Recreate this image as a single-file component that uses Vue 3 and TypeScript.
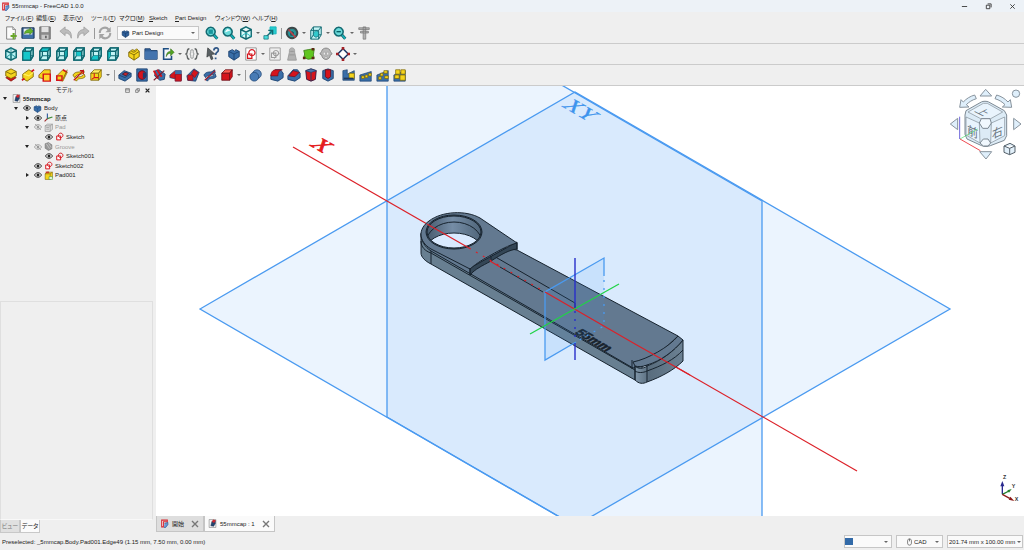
<script setup lang="ts">
import { ref } from 'vue'

interface Shape {
  d: string
  fill?: string
  stroke?: string
  w?: number
}
type Kind = 'icon' | 'arrow' | 'sep' | 'gap' | 'combo'
interface Tool {
  kind: Kind
  label?: string
  shapes?: Shape[]
}

const s = (d: string, fill = 'none', stroke = 'none', w = 1): Shape => ({ d, fill, stroke, w })
const icon = (label: string, ...shapes: Shape[]): Tool => ({ kind: 'icon', label, shapes })
const arrow: Tool = { kind: 'arrow' }
const sep: Tool = { kind: 'sep' }
const gap: Tool = { kind: 'gap' }
const combo: Tool = { kind: 'combo' }

const teal = '#17b5bb'
const deep = '#126a72'
const navy = '#1d4270'
const blue = '#396ea8'
const red = '#d5141c'
const yellow = '#f4d41c'
const olive = '#7a6408'
const gray = '#9b9b9b'

const FRAME = 'M2 5h9v10H2zM2 5l3-4h9v9l-3 5M11 5l3-4M5 1v9h9M5 10l-3 5'
const view = (label: string, face: string): Tool =>
  icon(label, s('M2 5l3-4h9v9l-3 5H2z', '#c4f5f6'), s(FRAME, 'none', deep, 1.4), s(face, '#16c6ca'), s('M2 5h9v10H2zM2 5l3-4h9v9l-3 5M11 5l3-4', 'none', deep, 1.5))
const ISO = 'M8 1l6 3v8l-6 3-6-3V4zM2 4l6 3 6-3M8 7v8'
const glass = [
  s('M9.5 9.5l4.5 5', 'none', deep, 3.4),
  s('M9.5 9.5l4.5 5', 'none', teal, 1.6),
  s('M6.5 1.5a5 5 0 1 0 .1 0z', '#6bdada', deep, 1.8),
]
const block = (top: string, side: string, edge: string): Shape[] => [
  s('M2 6l4-4h8l-3 4z', top, edge, 0.9),
  s('M2 6h9v8H2z', side, edge, 0.9),
  s('M11 6l3-4v8l-3 4z', side, edge, 0.9),
]
const arrowMark = s('M2 14L13 3M9 3h4v4', 'none', '#c4161c', 1.4)
const BODY = 'M2 5l4-2 3 2 1-2 4 2v6l-6 4-6-4z'
const sketchMark = [
  s('M3 7h7v7H3z', '#fff6f6', red, 1.7),
  s('M10 2a4 4 0 1 0 .1 0z', 'none', red, 1.7),
]

const rowFile: Tool[] = [
  icon('新規', s('M3 1h7l3 3v11H3z', '#fbfbfb', '#777', 1), s('M10 1v3h3', '#ddd', '#777', 0.8), s('M11 8v7M7.500 11.500h7', 'none', '#6aa62c', 2.4)),
  icon('開く', s('M1 2h14v12H1z', '#2d5688', '#193555', 1), s('M3 3h10v7H3z', '#e9eef3'), s('M4 9c0-4 3-5 6-5V2l4 4-4 4V8c-3 0-4 0-6 1z', '#63b32a', '#34701a', 0.6), s('M2 10h12v4H2z', '#3d6fa8')),
  icon('保存', s('M2 1h12v14H2z', '#8b8b8b', '#6b6b6b', 1), s('M4 1h8v6H4z', '#e2e2e2'), s('M4 10h8v5H4z', '#c7c7c7'), s('M8 11h2v3H8z', '#666')),
  gap,
  icon('元に戻す', s('M1 6l6-5v3c5 0 8 4 7 10-1-4-3-6-7-6v3z', '#bcbcbc', '#999', 0.8)),
  icon('やり直す', s('M15 6L9 1v3c-5 0-8 4-7 10 1-4 3-6 7-6v3z', '#bcbcbc', '#999', 0.8)),
  sep,
  icon('更新', s('M2 8c0-6 7-8 10-4M14 8c0 6-7 8-10 4', 'none', '#a3a3a3', 2.4), s('M14.500 1v6H8.500zM1.500 15V9h6z', '#a3a3a3')),
  combo,
  icon('全てにフィット', ...glass, s('M4 4h5v5H4z', '#18959b')),
  icon('選択にフィット', ...glass, s('M4 7l2-3 3 1', '#e9ffff', '#fff', 1)),
  icon('アイソメトリック', s(ISO, '#d9fbfb', deep, 1.6), s('M2 12l6-4 6 4', 'none', teal, 1)),
  arrow,
  icon('選択に合わせる', s('M8 1h7v8H8z', '#27cdd0', teal, 1), s('M2 14l8-8M6 5h5v5', 'none', deep, 1.6), s('M1 11h5v4H1z', '#47dede', deep, 0.8)),
  sep,
  icon('表示スタイル', s('M8 2a6 6 0 1 0 .1 0z', '#2f8a8e', '#3c4748', 2.2), s('M8 5l3 2v4l-3 1-3-1V7z', '#2a5a5e', teal, 0.8), s('M4 4l8 9', 'none', '#b9434a', 1.8)),
  arrow,
  icon('選択ビュー', s('M2 5l3-4h9v9l-3 5H2z', '#c4f5f6'), s(FRAME, 'none', deep, 1.1), s('M5 8l3-3 3 2v4l-3 2-3-2z', '#32c9cc', deep, 0.8)),
  arrow,
  icon('ズーム', ...glass, s('M4 6.500h5', 'none', '#075d63', 1.5)),
  arrow,
  icon('計測', s('M2 2h12v2H2zM4 6h9v2H4zM7 1h3v14H7z', '#b3b3b3', '#777', 0.8)),
]

const rowView: Tool[] = [
  icon('等角', s(ISO, '#b5f2f3', deep, 1.7), s('M8 1v6M2 12l6-4 6 4', 'none', '#1c8990', 1)),
  view('正面', 'M2 5h9v10H2z'),
  view('上面', 'M2 5l3-4h9l-3 4z'),
  view('右', 'M11 5l3-4v9l-3 5z'),
  view('背面', 'M5 5h6v5H5z'),
  view('底面', 'M2 15l3-5h6v5z'),
  view('左', 'M2 5h3v5l-3 5z'),
  gap,
  icon('パーツ', s('M2 6l4-3 3 1 2-2 3 3v6l-6 4-6-4z', yellow, olive, 1), s('M2 6l6 3 6-4M8 9v6M5 5l3 1 3-2', 'none', olive, 1)),
  icon('グループ', s('M1 2h6l1 2h7v10H1z', '#315f98', '#1e416d', 1), s('M1 5h14v9H1z', '#4474ae')),
  icon('リンク', s('M9 2H3v12h9v-4', '#f2f6fb', '#1d4e82', 1.8), s('M6 11c0-4 2-6 5-6V2l4 4-4 4V7c-3 0-4 2-5 4z', '#52a421', '#2c6413', 0.6)),
  arrow,
  icon('変数セット', s('M5 2C1 2 4 7 1 8c3 1 0 6 4 6M11 2c4 0 1 5 4 6-3 1 0 6-4 6', 'none', '#5e6262', 1.5), s('M8 3c-3 0 0 4-2.500 5 2.500 1-.500 5 2.500 5M8 3c3 0 0 4 2.500 5-2.500 1 .500 5-2.500 5', 'none', '#8a8f8f', 1)),
  gap,
  icon('これは何', s('M2 1l8 7-4 .500 2 5-2 1-2-5-3 2z', '#596063', '#35393b', 0.8), s('M9 4c0-4 6-4 5 0 0 2-3 2-3 5M11 12v2', 'none', '#325887', 2)),
  gap,
  icon('ボディ', s(BODY, blue, navy, 1), s('M2 5l6 3 6-3M8 8v7', 'none', navy, 1)),
  icon('スケッチ', s('M2 1h12v14H2z', '#fff', '#8b8b8b', 1), s('M4 8h5v5H4z', '#fff6f6', red, 1.4), s('M9 3a3.500 3.500 0 1 0 .1 0z', 'none', red, 1.4)),
  arrow,
  icon('スケッチを編集', s('M2 1h12v14H2z', '#eee', '#999', 1), s('M4 7h5v5H4zM9 4a3 3 0 1 0 .1 0M7 13l6-6', 'none', gray, 1.2)),
  icon('検証', s('M5 6V4c0-4 6-4 6 0v2l2 9H3z', '#b2b2b2', '#9a9a9a', 1), s('M6 5h4M5 9h6', 'none', '#929292', 1)),
  icon('面に付ける', s('M2 4l5-1 7-1-1 7 1 4-7 1-5-2 1-4z', '#61c51f', '#3b8218', 1), s('M1 11h3v3H1zM11 1h3v3h-3zM11 11h3v3h-3z', '#5c2715')),
  icon('クローン', s('M3 5c1-5 9-5 10 0l2 3-2 1c-1 7-9 7-10 0L1 8z', '#b9b9b9', '#818181', 1), s('M5 6h2v3H5zM9 6h2v3H9zM7 11h2v2H7z', '#fff', '#888', 0.5)),
  icon('データム', s('M8 2l6 6-6 6-6-6z', '#fff', '#1b3765', 1.8), s('M6.500 0h3v3h-3zM13 6.500h3v3h-3zM6.500 13h3v3h-3zM0 6.500h3v3H0z', '#a52025')),
  arrow,
]

const yBlock = block('#ffed65', yellow, olive)
const rBlock = block('#ff5b50', red, '#680c16')
const rowDesign: Tool[] = [
  icon('パッド', s('M2 11l6-3 6 3-6 4z', red, '#7b1c10', 0.8), s('M2 4l6-3 6 3v5l-6 3-6-3z', yellow, olive, 1), s('M2 4l6 3 6-3', 'none', olive, 1)),
  icon('レボリューション', s('M2 7l7-5 5 3v5l-7 5-5-3z', yellow, olive, 1), s('M3 7l6 2 5-4', 'none', '#fff05e', 1.4), s('M1 14l3-2M12 4l3-2', 'none', red, 1.8)),
  icon('ロフト', s('M1 11V8l6-6h7v12z', yellow, '#7b3b00', 0.8), s('M6 7h8v8H6z', '#ffd42a', red, 1.7)),
  icon('スイープ', s('M2 9l7-7 5 3-5 10-7-1z', yellow, '#8a5a00', 0.8), s('M2 9h6v5H2zM9 2l5 3', 'none', red, 1.7), s('M9 13l5-11', 'none', olive, 1)),
  icon('ヘリックス', s('M1 8c4-6 8-1 12-6l1 3c-4 4-7 0-11 6zM3 13c4-5 7-1 11-6l1 3c-4 4-7 0-10 5z', yellow, olive, 0.9), arrowMark),
  icon('プリミティブ', ...yBlock, s('M6 6v5M3 13l3-2h5', 'none', red, 1.2)),
  arrow,
  sep,
  icon('ポケット', s('M1 8l6-5 8 3v4l-7 5-7-3z', blue, navy, 1), s('M5 7l3-2 4 1-3 3z', '#c3292e', '#31102a', 0.8), s('M1 8l7 3 7-5', 'none', navy, 1)),
  icon('ホール', s('M2 1h12v14H2z', blue, navy, 1), s('M8 3a4.500 5 0 1 0 .1 0z', red, '#5b1027', 1), s('M9 5v7l4-2V5z', '#203c70')),
  icon('グルーブ', s('M4 3l4-1 7 5-1 6-5 1-6-5z', blue, navy, 1), s('M2 3l5 9M6 2l5 8', 'none', red, 2.2), s('M2 14L14 3', 'none', '#771b2c', 1.2)),
  icon('減算ロフト', s('M1 11V8l6-5h7v11z', red, navy, 0.8), s('M7 7h7v8H7z', red, '#7b1735', 1), s('M7 3h7v4H7z', blue)),
  icon('減算パイプ', s('M1 9l8-8 6 4-4 10-9-1z', blue, navy, 1), s('M2 8h6v6H2zM9 2l5 3-4 6-4-4z', red, '#7b1735', 0.8)),
  icon('減算ヘリックス', s('M1 8c4-6 8-1 12-6l1 4c-4 4-7 0-11 5zM3 13c4-5 7-1 11-6l1 3c-4 4-7 0-10 5z', blue, navy, 1), s('M2 14L14 3', 'none', '#a01a2c', 1.3)),
  icon('減算プリミティブ', ...rBlock),
  arrow,
  sep,
  icon('ブーリアン', s('M9 2a5 5 0 1 0 .1 0z', '#5686bd', navy, 0.8), s('M6 5a5 5 0 1 0 .1 0z', '#477bb5', navy, 0.8)),
  gap,
  icon('フィレット', s('M1 8l5-6h6l3 4v5l-6 4-8-2z', blue, navy, 1), s('M1 9c0-4 2-7 6-7h7c-3 0-5 3-5 7z', red, '#6a1020', 0.8)),
  icon('面取り', s('M1 9l6-7h5l3 4v5l-6 4-8-2z', blue, navy, 1), s('M2 9l5-6 7 2-5 5z', red, '#6a1020', 0.8)),
  icon('抜き勾配', s('M2 3l6-2 6 2-1 10-5 2-5-2z', red, '#32183e', 1), s('M2 3l6 2 6-2-6-2z', '#4d76ad', navy, 0.8), s('M8 5v10', 'none', navy, 1)),
  icon('厚み', s('M2 3l6-2 6 2v9l-6 3-6-3z', blue, navy, 1), s('M5 2h6v8l-3 2-3-2z', red, '#6a1020', 1)),
  gap,
  icon('鏡像', s('M1 14V3l5-1v5l8-4v11z', blue, navy, 0.8), s('M8 6h6v6H8z', yellow, olive, 0.8), s('M2 12h11', 'none', '#20395b', 2)),
  icon('直線状パターン', s('M1 15V8l13-4v11z', blue, navy, 0.8), s('M3 9h3v3H3zM7 8h3v3H7zM11 6h3v3h-3z', yellow, olive, 0.8)),
  icon('円形状パターン', s('M1 15V8l13-5v12z', blue, navy, 0.8), s('M3 10h3v3H3zM5 6h3v3H5zM9 3h4v3H9zM10 9h4v3h-4z', yellow, olive, 0.8)),
  icon('マルチ変換', s('M1 15V8l13-5v12z', blue, navy, 0.8), s('M3 2h5v5H3zM9 2h5v5H9zM2 8h5v4H2zM8 8h6v6H8z', yellow, olive, 0.8)),
]
const toolbars = [
  { name: 'ファイルと表示', tools: rowFile },
  { name: 'ビューと構造', tools: rowView },
  { name: 'パートデザイン', tools: rowDesign },
]

const menus = ['ファイル(F)', '編集(E)', '表示(V)', 'ツール(T)', 'マクロ(M)', 'Sketch', 'Part Design', 'ウィンドウ(W)', 'ヘルプ(H)'].map((t) => {
  const m = t.match(/^(.*)\((\w)\)$/)
  return m ? { pre: m[1] + '(', key: m[2], post: ')' } : { pre: '', key: t[0], post: t.slice(1) }
})

const documentShapes = [
  s('M2 1h12v14H2z', '#f5f5f5', '#777', 1),
  s('M7 4l6-1v5l-3 5-5-1z', '#23446f', '#142848', 0.8),
  s('M9 1l5 1-3 5-4-2z', '#cc2830'),
]
const originShapes = [s('M6 1v10', 'none', '#315c9e', 2), s('M6 10l9-3', 'none', '#3d8a34', 2), s('M6 10l-5 5', 'none', '#a02d2d', 2)]
const padGray = [s('M2 5l4-3h9v9l-4 4H2z', '#ddd', '#858585', 1), s('M2 5h9v10M11 5l4-3M4 8h5M4 11h5', 'none', '#858585', 1)]
const grooveGray = [s('M2 3l6-2 6 4v7l-6 3-6-4z', '#999', '#707070', 1), s('M4 3l6 9M8 2l5 8', 'none', '#d4d4d4', 1.2)]
const padTip = [s('M2 5l4-3h9v9l-4 4H2z', yellow, olive, 1), s('M2 5h9l4-3M11 5v10', 'none', olive, 1), s('M9 10h6v5H9z', '#e8f7e8', '#4a9a2d', 1), s('M3 1h6v3H3z', '#c43c28')]

interface Node {
  text: string
  level: number
  open?: boolean
  leaf?: boolean
  hidden?: boolean
  shapes: Shape[]
}
const nodes: Node[] = [
  { text: '55mmcap', level: 0, open: true, shapes: documentShapes },
  { text: 'Body', level: 1, open: true, shapes: [s(BODY, blue, navy, 1), s('M2 5l6 3 6-3M8 8v7', 'none', '#1a4c8b', 1)] },
  { text: '原点', level: 2, shapes: originShapes },
  { text: 'Pad', level: 2, open: true, hidden: true, shapes: padGray },
  { text: 'Sketch', level: 3, leaf: true, shapes: sketchMark },
  { text: 'Groove', level: 2, open: true, hidden: true, shapes: grooveGray },
  { text: 'Sketch001', level: 3, leaf: true, shapes: sketchMark },
  { text: 'Sketch002', level: 2, leaf: true, shapes: sketchMark },
  { text: 'Pad001', level: 2, shapes: padTip },
]

const logo = [s('M3 14V2h10v3H6v9z', '#fff', '#d4232b', 1.8), s('M8 8l6-2v4l-4 5H7', '#6b97d2', '#285590', 1.2)]
const workbench = ref('Part Design')
const navStyle = ref('CAD')
const dimension = ref('201.74 mm x 100.00 mm')
const notify = ref('')
</script>

<template>
  <div class="app">
    <header class="title">
      <svg class="glyph" viewBox="0 0 16 16"><path v-for="(p, i) in logo" :key="i" :d="p.d" :fill="p.fill" :stroke="p.stroke" :stroke-width="p.w" /></svg>
      <span class="caption">55mmcap - FreeCAD 1.0.0</span>
      <button class="win" aria-label="最小化"><svg viewBox="0 0 8 8"><path d="M1 4h6" /></svg></button>
      <button class="win" aria-label="元に戻す"><svg viewBox="0 0 8 8"><path d="M1.500 2.500h4v4h-4zM3 1h4v4" /></svg></button>
      <button class="win" aria-label="閉じる"><svg viewBox="0 0 8 8"><path d="M1.500 1.500l5 5M6.500 1.500l-5 5" /></svg></button>
    </header>

    <nav class="menu">
      <button v-for="m in menus" :key="m.pre + m.key">{{ m.pre }}<u>{{ m.key }}</u>{{ m.post }}</button>
    </nav>

    <div v-for="bar in toolbars" :key="bar.name" class="toolbar" role="toolbar" :aria-label="bar.name">
      <template v-for="(t, i) in bar.tools" :key="i">
        <button v-if="t.kind === 'icon'" class="tool" :aria-label="t.label">
          <svg viewBox="0 0 16 16"><path v-for="(p, k) in t.shapes" :key="k" :d="p.d" :fill="p.fill" :stroke="p.stroke" :stroke-width="p.w" /></svg>
        </button>
        <button v-else-if="t.kind === 'arrow'" class="drop" aria-label="その他"><i class="caret"></i></button>
        <span v-else-if="t.kind === 'sep'" class="sep"></span>
        <span v-else-if="t.kind === 'gap'" class="gap"></span>
        <span v-else class="combo workbench">
          <svg class="glyph" viewBox="0 0 16 16"><path d="M2 5l4-2 3 2 1-2 4 2v6l-6 4-6-4z" fill="#2e5f99" stroke="#173b66" /><path d="M2 5l6 3 6-3M8 8v7" fill="none" stroke="#173b66" /></svg>
          <select v-model="workbench" aria-label="ワークベンチ"><option>Part Design</option></select>
          <i class="caret"></i>
        </span>
      </template>
    </div>

    <div class="body">
      <aside class="side">
        <div class="dock-title">
          <span>モデル</span>
          <button aria-label="固定"><svg viewBox="0 0 8 8"><path d="M1 1h6v6H1zM1 3h6" /></svg></button>
          <button aria-label="フロート"><svg viewBox="0 0 8 8"><path d="M1 3h4v4H1zM3 3V1h4v4H5" /></svg></button>
          <button aria-label="閉じる"><svg class="strong" viewBox="0 0 8 8"><path d="M1 1l6 6M7 1L1 7" /></svg></button>
        </div>
        <div class="tree-area">
          <ul class="tree" role="tree">
            <li v-for="n in nodes" :key="n.text" role="treeitem" :class="['level' + n.level, { muted: n.hidden }]">
              <span class="twist"><i v-if="!n.leaf" :class="n.open ? 'down' : 'right'"></i></span>
              <svg v-if="n.level > 0" class="eye" viewBox="0 0 16 16">
                <path d="M1 8c3-6 11-6 14 0-3 6-11 6-14 0z" fill="#fff" stroke="currentColor" stroke-width="1.800" />
                <circle cx="8" cy="8" r="3" fill="currentColor" />
                <path v-if="n.hidden" d="M2 2l12 12" stroke="currentColor" stroke-width="1.500" />
              </svg>
              <svg class="kind" viewBox="0 0 16 16"><path v-for="(p, k) in n.shapes" :key="k" :d="p.d" :fill="p.fill" :stroke="p.stroke" :stroke-width="p.w" /></svg>
              <span class="name">{{ n.text }}</span>
            </li>
          </ul>
        </div>
        <div class="props"></div>
        <div class="prop-tabs">
          <button>ビュー</button>
          <button class="on">データ</button>
        </div>
      </aside>

      <main class="work">
        <div class="canvas">
          <svg class="scene" viewBox="156 86 868 430" preserveAspectRatio="xMidYMid slice">
            <defs>
              <linearGradient id="bore" x1="0" x2="1"><stop offset="0" stop-color="#3c4e60" /><stop offset="0.500" stop-color="#758da6" /><stop offset="1" stop-color="#4b6074" /></linearGradient>
              <linearGradient id="lip" x1="0" x2="1"><stop offset="0" stop-color="#8197aa" /><stop offset="0.300" stop-color="#596d7e" /><stop offset="1" stop-color="#6c8193" /></linearGradient>
              <clipPath id="hole"><ellipse cx="454" cy="232" rx="27" ry="16" /></clipPath>
            </defs>
            <g class="plane">
              <path d="M200 309L575 92l375 217-375 217z" />
              <path d="M387-16l375 217v433L387 417z" />
            </g>
            <g class="frame">
              <path d="M200 309L575 92l375 217-375 217z" />
              <path d="M387-16l375 217v433L387 417z" />
            </g>
            <text class="label red" transform="matrix(0.87 0.5 -0.87 0.5 309 145)">X</text>
            <text class="label sky" transform="matrix(0.87 0.5 -0.87 0.5 561 106)">XY</text>
            <path class="axis-x" d="M293 147L857 471" />

            <g class="part">
              <path class="face side-face" d="M421 233v20c0 4 4 8 10 11l204 116 8-14-190-120z" />
              <path class="face" d="M421 234c0 7 4 13 10 17l202 117 14-3 31-29-161-86-60-10z" />
              <path class="line" d="M421 241c0 6 4 10 10 12l204 117M431 251v13M492 255l83 48v7M500 267l43 25" />
              <path class="face dark-face" d="M470 268v7c5-6 12-9 21-14 11-7 18-11 26-12v-7z" />
              <path class="face" d="M517 243c-8 2-17 7-26 12-7 4-13 7-21 14l-39-20c-13-8-13-20-2-28 13-10 37-11 51-3z" />
              <path class="line" d="M470 268v7M491 256v6M517 243v7" />
              <ellipse class="rim" cx="454" cy="232" rx="28" ry="17" />
              <g clip-path="url(#hole)">
                <path fill="url(#bore)" d="M420 210h65v45h-65z" />
                <ellipse cx="454" cy="243" rx="28" ry="21" fill="none" stroke="#17232e" />
                <ellipse cx="454" cy="250" rx="28" ry="17" fill="#d9eaff" stroke="#17232e" />
              </g>
              <ellipse class="line" cx="454" cy="232" rx="27" ry="16" />
              <path fill="url(#lip)" class="edge" d="M635 366c3 3 8 3 12 0 14-5 27-15 36-26v21c-9 9-22 16-36 21-4 2-8 2-12-2z" />
              <path class="face" d="M633 362c15-3 36-15 45-26l5 4c-9 11-22 21-36 25-5 2-9 2-12 1z" />
              <path class="line" d="M635 371c3 2 8 2 12 0 14-5 27-11 36-21M635 366v14M647 365v17M632 360v9" />
              <text class="engrave" transform="matrix(0.87 0.5 -0.87 0.5 574 333)">55mm</text>
            </g>

            <path class="plane" d="M545 292l59-34v68l-59 34z" />
            <path class="frame" d="M604 276v-18l-59 34v68l31-18" />
            <path class="frame dots" d="M604 280v46l-28 16" />
            <path class="axis-x" d="M427 224l42 24M490 261l10 6M545 292l90 52 55 31" />
            <path class="axis-x dots" d="M469 248l76 44" />
            <path class="axis-y" d="M530 334l89-50" />
            <path class="axis-z" d="M575 258v50M575 345v15" />
            <path class="axis-z dots" d="M575 311v34" />
          </svg>

          <svg class="navcube" viewBox="0 12 252 228" role="img" aria-label="ナビゲーションキューブ">
            <g fill="#dfeffb" stroke="#88939d" stroke-width="3">
              <path d="M120 42l17-20 18 20zM119 209h36l-17 22zM53 109v34l-22-17zM221 109v34l22-17z" />
              <path d="M59 76l4-23 7 7c9-10 20-17 34-21l5 11c-13 4-22 10-30 18l8 7zM215 76l-4-23-7 7c-9-10-20-17-34-21l-5 11c13 4 22 10 30 18l-8 7z" />
              <circle cx="228" cy="35" r="11" />
            </g>
            <path d="M78 86l46-26c6-3 16-3 22 0l47 26 7 13v62l-7 14-42 16c-8 3-18 3-26 0l-44-20-6-14V99z" fill="#dcebf6" stroke="#7d8993" stroke-width="3" />
            <path d="M84 90l46-26h12l46 26-36 20h-30zM78 105l40 18 2 60-42-24zM154 123l40-18v56l-42 22z" fill="#e9f4fd" stroke="#7d8993" stroke-width="2" />
            <path d="M124 110l-6 13 10 16h16l10-16-4-13zM120 183l10 9h14l8-9-8-12h-14z" fill="#f0f8fe" stroke="#7d8993" stroke-width="3" />
            <text transform="matrix(0.87 0.45 -0.87 0.45 102 88)" font-size="34">上</text>
            <text transform="matrix(0.9 0.4 0 1 82 155)" font-size="36">前</text>
            <text transform="matrix(0.9 -0.4 0 1 156 171)" font-size="36">右</text>
            <path d="M59 104v67" stroke="#6f68db" stroke-width="3" />
            <path d="M60 171l53-30" stroke="#4bdd69" stroke-width="2" />
            <path d="M60 171l61 35" stroke="#ef4b52" stroke-width="3" />
            <path d="M192 192l18-8 15 8v19l-16 7-17-7zM192 192l17 7 16-7M209 199v19" fill="#e2f0fa" stroke="#54606a" stroke-width="3" />
          </svg>

          <svg class="triad" viewBox="519 21 93 132" role="img" aria-label="座標軸">
            <g fill="none" stroke-width="4"><path d="M547 88V57" stroke="#29298e" /><path d="M547 88l20-10" stroke="#227f2c" /><path d="M547 88l22 12" stroke="#8b1a1a" /></g>
            <path d="M541 64l6-16 6 16z" fill="#29298e" /><path d="M562 76l13-4-8 11z" fill="#227f2c" /><path d="M566 104l5-9 12 13z" fill="#8b1a1a" />
            <text x="549" y="43">Z</text><text x="575" y="70">Y</text><text x="584" y="108">X</text>
          </svg>
        </div>
        <div class="docs">
          <div class="doc">
            <svg class="glyph" viewBox="0 0 16 16"><path v-for="(p, i) in logo" :key="i" :d="p.d" :fill="p.fill" :stroke="p.stroke" :stroke-width="p.w" /></svg>
            <button class="doc-name">開始</button>
            <button class="close" aria-label="開始を閉じる"><svg viewBox="0 0 8 8"><path d="M1 1l6 6M7 1L1 7" /></svg></button>
          </div>
          <div class="doc on">
            <svg class="glyph" viewBox="0 0 16 16"><path v-for="(p, i) in documentShapes" :key="i" :d="p.d" :fill="p.fill" :stroke="p.stroke" :stroke-width="p.w" /></svg>
            <button class="doc-name">55mmcap : 1</button>
            <button class="close" aria-label="55mmcapを閉じる"><svg viewBox="0 0 8 8"><path d="M1 1l6 6M7 1L1 7" /></svg></button>
          </div>
        </div>
      </main>
    </div>

    <footer class="status">
      <span class="message">Preselected: _5mmcap.Body.Pad001.Edge49 (1.15 mm, 7.50 mm, 0.00 mm)</span>
      <span class="combo notice"><i class="swatch"></i><select v-model="notify" aria-label="通知"><option value=""></option></select><i class="caret"></i></span>
      <span class="combo mouse">
        <svg viewBox="0 0 8 12"><path d="M1 4c0-4 6-4 6 0v4c0 4-6 4-6 0zM4 1v4" /></svg>
        <select v-model="navStyle" aria-label="ナビゲーション"><option>CAD</option></select><i class="caret"></i>
      </span>
      <span class="combo size"><select v-model="dimension" aria-label="表示寸法"><option>201.74 mm x 100.00 mm</option></select><i class="caret"></i></span>
    </footer>
  </div>
</template>

<style>
html, body { margin: 0; height: 100%; }
</style>

<style scoped>
.app {
  display: flex;
  flex-direction: column;
  height: 100vh;
  overflow: hidden;
  background: #efefef;
  color: #222;
  font-family: "Liberation Sans", "Noto Sans CJK JP", sans-serif;
  font-size: 6px;
  line-height: 8px;
}
button, select {
  appearance: none;
  margin: 0;
  padding: 0;
  border: 0;
  border-radius: 0;
  background: none;
  color: inherit;
  font: inherit;
}
svg { display: block; flex: none; }
.glyph { width: 9px; height: 9px; }

.title { display: flex; flex: none; align-items: center; height: 12px; padding-left: 1px; background: #edf2f7; }
.caption { flex: 1; padding-left: 2px; }
.win { display: flex; justify-content: center; width: 24px; }
.win svg { width: 7px; height: 7px; fill: none; stroke: #333; stroke-width: 1; }

.menu {
  display: grid;
  flex: none;
  grid-template-columns: 31px 27px 28px 28px 30px 26px 40px 37px auto;
  height: 11px;
  padding-left: 5px;
}
.menu button { justify-self: start; white-space: nowrap; font-feature-settings: "palt"; }

.toolbar { display: flex; flex: none; align-items: center; box-sizing: border-box; height: 21px; padding: 0 2px; border-bottom: 1px solid #cbcbcb; }
.tool { display: flex; flex: none; justify-content: center; width: 17px; }
.tool svg { width: 14px; height: 14px; }
.drop { display: flex; flex: none; justify-content: center; width: 7px; }
.caret { width: 0; border: 2px solid transparent; border-top-color: #666; border-bottom: 0; }
.sep { flex: none; box-sizing: border-box; width: 4px; height: 11px; border-right: 1px solid #999; margin-right: 1px; }
.gap { flex: none; width: 4px; }

.combo { display: flex; flex: none; align-items: center; box-sizing: border-box; border: 1px solid #c6c6c6; background: #fafafa; }
.combo select { flex: 1; min-width: 0; height: 10px; padding: 0 2px; }
.combo .caret { margin-right: 3px; }
.workbench { width: 82px; height: 14px; margin: 0 4px; padding-left: 3px; }

.body { display: flex; flex: 1; min-height: 0; }
.side { display: flex; flex: none; flex-direction: column; width: 153px; margin-right: 3px; }
.work { display: flex; flex: 1; flex-direction: column; min-width: 0; }

.dock-title { display: flex; flex: none; align-items: center; height: 8px; padding-right: 1px; }
.dock-title span { flex: 1; padding-left: 7px; text-align: center; font-feature-settings: "palt"; }
.dock-title button { display: flex; justify-content: center; width: 10px; }
.dock-title svg { width: 5px; height: 5px; fill: none; stroke: #555; stroke-width: 1; }
.dock-title .strong { stroke: #222; stroke-width: 2; }

.tree-area { flex: 207; min-height: 0; }
.tree { display: grid; grid-auto-rows: 1fr; height: 86px; margin: 0; padding: 0; list-style: none; }
.tree li { display: flex; align-items: center; color: #222; }
.tree .level0 { font-weight: bold; }
.tree .level1 { padding-left: 11px; }
.tree .level2 { padding-left: 22px; }
.tree .level3 { padding-left: 33px; }
.tree .muted { color: #999; }
.twist { display: flex; flex: none; justify-content: center; width: 10px; }
.down { border: 2px solid transparent; border-top: 3px solid #222; border-bottom: 0; }
.right { border: 2px solid transparent; border-left: 3px solid #222; border-right: 0; }
.eye { width: 8px; height: 8px; margin: 0 1px 0 2px; }
.kind { width: 9px; height: 9px; margin: 0 1px; }
.level0 .kind { margin: 0 1px 0 2px; }
.name { padding-left: 1px; white-space: nowrap; }

.props { flex: 218; box-sizing: border-box; min-height: 0; border: 1px solid #dfdfdf; border-bottom-color: #f8f8f8; }
.prop-tabs { display: flex; flex: none; height: 13px; font-feature-settings: "palt"; }
.prop-tabs button { width: 20px; border: 1px solid #c8c8c8; border-top: 0; background: #e0e0e0; color: #777; white-space: nowrap; }
.prop-tabs .on { background: #fbfbfb; color: #222; }

.canvas { position: relative; flex: 1; min-height: 0; background: #fff; }
.scene { width: 100%; height: 100%; }
.navcube { position: absolute; top: 0; right: 0; width: 84px; height: 76px; }
.navcube text { fill: #65717b; font-family: "Noto Sans CJK JP", sans-serif; }
.triad { position: absolute; right: 0; bottom: 0; width: 31px; height: 44px; }
.triad text { fill: #333; font-size: 16px; font-weight: bold; }
.plane { fill: #3b98fa; fill-opacity: 0.1; }
.frame { fill: none; stroke: #4a9af0; stroke-width: 1.3; }
.axis-x { fill: none; stroke: #dc2028; stroke-width: 1.2; }
.axis-y { fill: none; stroke: #21d347; stroke-width: 1.3; }
.axis-z { fill: none; stroke: #2830c9; stroke-width: 1.4; }
.dots { stroke-dasharray: 2 6; }
.face { fill: #637990; stroke: #17232e; stroke-width: 1; }
.side-face { fill: #687f91; }
.dark-face { fill: #344656; }
.line { fill: none; stroke: #17232e; stroke-width: 1; }
.edge { stroke: #17232e; }
.rim { fill: #4a5d6f; stroke: #17232e; }
.label { font-family: "Liberation Serif", serif; font-size: 22px; }
.red { fill: #e51c20; stroke: #e51c20; stroke-width: 0.8; }
.sky { fill: #3d94ed; stroke: #3d94ed; stroke-width: 0.4; }
.engrave { fill: #18232d; stroke: #18232d; stroke-width: 0.6; font-size: 13px; font-weight: bold; }

.docs { display: flex; flex: none; height: 17px; }
.doc { display: flex; align-items: center; box-sizing: border-box; height: 16px; padding: 0 4px 0 3px; border: 1px solid #c5c5c5; border-top: 0; background: #dedede; }
.doc.on { background: #fafafa; }
.doc-name { padding: 0 7px 0 3px; white-space: nowrap; }
.close svg { width: 8px; height: 8px; fill: none; stroke: #777; stroke-width: 1.4; }

.status { display: flex; flex: none; align-items: center; gap: 4px; height: 17px; padding: 0 1px 0 2px; }
.message { flex: 1; white-space: nowrap; }
.status .combo { height: 13px; }
.notice { width: 48px; }
.mouse { width: 47px; padding-left: 10px; }
.size { width: 76px; }
.mouse svg { width: 5px; height: 8px; fill: #fff; stroke: #333; }
.size select { padding: 0 0 0 1px; }
.size .caret { margin-right: 1px; }
.swatch { width: 8px; height: 7px; background: #326aa8; }
</style>
